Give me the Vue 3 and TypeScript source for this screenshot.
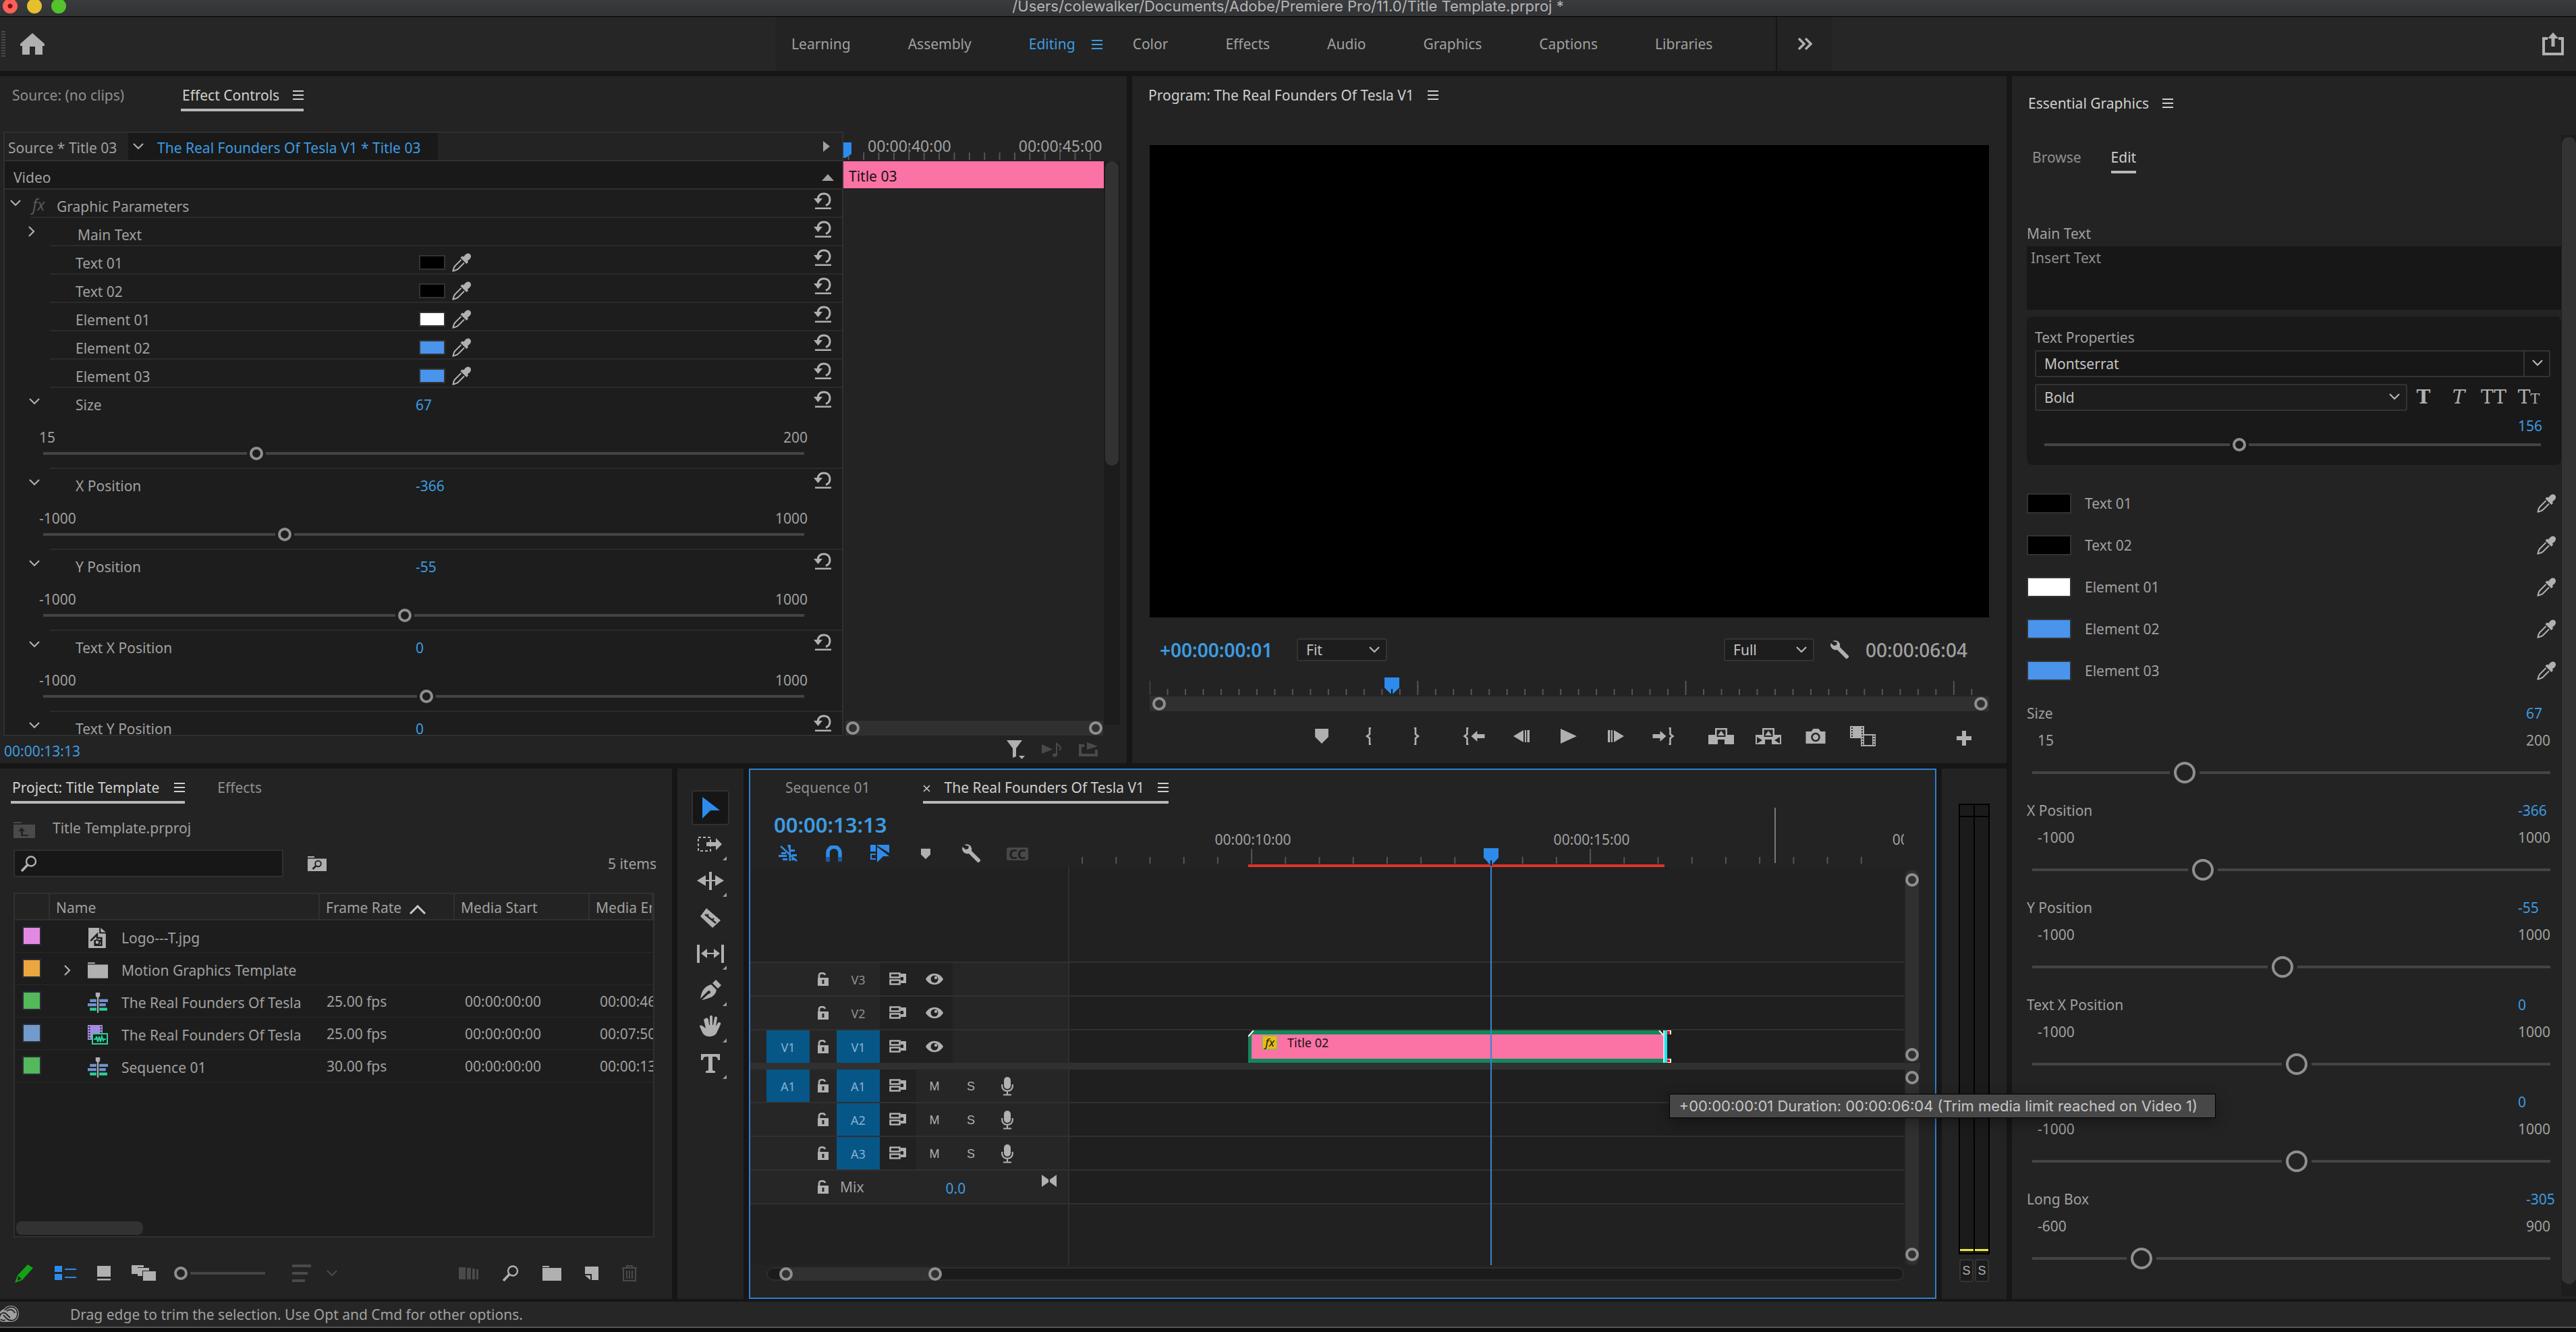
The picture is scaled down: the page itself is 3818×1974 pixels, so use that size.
<script setup lang="ts">
import { ref } from 'vue'

interface Workspace { name: string; active?: boolean }
interface ColorParam { name: string; color: string }
interface RangeParam { id: string; name: string; value: number; min: number; max: number }
interface ProjectItem {
  name: string
  label: string
  icon: string
  fps?: string
  start?: string
  end?: string
  folder?: boolean
}

const workspaces: Workspace[] = [
  { name: 'Learning' },
  { name: 'Assembly' },
  { name: 'Editing', active: true },
  { name: 'Color' },
  { name: 'Effects' },
  { name: 'Audio' },
  { name: 'Graphics' },
  { name: 'Captions' },
  { name: 'Libraries' },
]

const colorParams: ColorParam[] = [
  { name: 'Text 01', color: '#000000' },
  { name: 'Text 02', color: '#000000' },
  { name: 'Element 01', color: '#ffffff' },
  { name: 'Element 02', color: '#4a94ec' },
  { name: 'Element 03', color: '#4a94ec' },
]

const rangeParams = ref<RangeParam[]>([
  { id: 'size', name: 'Size', value: 67, min: 15, max: 200 },
  { id: 'x', name: 'X Position', value: -366, min: -1000, max: 1000 },
  { id: 'y', name: 'Y Position', value: -55, min: -1000, max: 1000 },
  { id: 'tx', name: 'Text X Position', value: 0, min: -1000, max: 1000 },
  { id: 'ty', name: 'Text Y Position', value: 0, min: -1000, max: 1000 },
  { id: 'box', name: 'Long Box', value: -305, min: -600, max: 900 },
])

const items: ProjectItem[] = [
  { name: 'Logo---T.jpg', label: '#e389e3', icon: 'image' },
  { name: 'Motion Graphics Template', label: '#eca63f', icon: 'folder', folder: true },
  { name: 'The Real Founders Of Tesla', label: '#53b95a', icon: 'sequence', fps: '25.00 fps', start: '00:00:00:00', end: '00:00:46:00' },
  { name: 'The Real Founders Of Tesla', label: '#729acb', icon: 'media', fps: '25.00 fps', start: '00:00:00:00', end: '00:07:50:00' },
  { name: 'Sequence 01', label: '#53b95a', icon: 'sequence', fps: '30.00 fps', start: '00:00:00:00', end: '00:00:13:00' },
]

const tools = [
  { id: 'select', name: 'Selection', more: false },
  { id: 'trackselect', name: 'Track select', more: true },
  { id: 'ripple', name: 'Ripple edit', more: true },
  { id: 'razor', name: 'Razor', more: false },
  { id: 'slip', name: 'Slip', more: true },
  { id: 'pen', name: 'Pen', more: true },
  { id: 'hand', name: 'Hand', more: true },
  { id: 'type', name: 'Type', more: true },
]

const videoTracks = [
  { name: 'V3', target: false, source: '' },
  { name: 'V2', target: false, source: '' },
  { name: 'V1', target: true, source: 'V1' },
]
const audioTracks = [
  { name: 'A1', source: 'A1' },
  { name: 'A2', source: '' },
  { name: 'A3', source: '' },
]

const transport = [
  ['marker', 'in', 'out'],
  ['goin', 'stepback', 'play', 'stepfwd', 'goout'],
  ['lift', 'extract', 'camera', 'compare'],
]

/* Timeline view window, in seconds */
const viewStart = 7.31
const viewSpan = 12.32
const at = (t: number): string => `${((t - viewStart) / viewSpan) * 100}%`
const halfSeconds = Array.from({ length: 24 }, (_, i) => 7.5 + i / 2)
const timeLabels = [
  { t: 10, text: '00:00:10:00' },
  { t: 15, text: '00:00:15:00' },
  { t: 20, text: '00:00:20:00' },
]
const clip = { name: 'Title 02', start: 9.95, end: 16.09 }
const playhead = 13.52
const pointer = 17.72

/* Program monitor ruler: 47 divisions, one long tick in fifteen */
const programTicks = Array.from({ length: 47 }, (_, i) => ({ x: `${(i * 100) / 46.97}%`, major: i % 15 === 0 }))
const effectTicks = Array.from({ length: 18 }, (_, i) => ({ x: `${2 + i * 5.8}%`, major: i === 4 || i === 14 }))

const fontSize = ref(156)
const zoom = ref(0)
const mainText = ref('Insert Text')
</script>

<template>
  <div class="app">
    <svg class="sprite" aria-hidden="true">
      <symbol id="home" viewBox="0 0 36 32"><path d="M18 0 36 16v3h-3v13H22V20h-8v12H3V19H0v-3z" /></symbol>
      <symbol id="share" viewBox="0 0 32 34"><path d="M8 9H2v23h28V9h-6" fill="none" stroke="currentColor" stroke-width="4" /><path d="M16 0l8 9h-5.500v12h-5V9H8z" /></symbol>
      <symbol id="more" viewBox="0 0 22 18"><path d="M2 1l8 8-8 8M12 1l8 8-8 8" fill="none" stroke="currentColor" stroke-width="3.500" /></symbol>
      <symbol id="menu" viewBox="0 0 16 14"><path d="M0 0h16v2H0zM0 6h16v2H0zM0 12h16v2H0z" /></symbol>
      <symbol id="down" viewBox="0 0 16 10"><path d="M1 1l7 7 7-7" fill="none" stroke="currentColor" stroke-width="2.200" /></symbol>
      <symbol id="right" viewBox="0 0 10 16"><path d="M1 1l7 7-7 7" fill="none" stroke="currentColor" stroke-width="2.200" /></symbol>
      <symbol id="caret" viewBox="0 0 24 14"><path d="M1 13L12 2l11 11" fill="none" stroke="currentColor" stroke-width="3" /></symbol>
      <symbol id="reset" viewBox="0 0 26 26"><path d="M6 10C7 4 11 2 15 2c6 0 9 4 9 9 0 4-2 7-6 8.500" fill="none" stroke="currentColor" stroke-width="3" /><path d="M0 9h13l-6.500 8zM2 22.500h24V25H2z" /></symbol>
      <symbol id="dropper" viewBox="0 0 28 28"><path d="M18 4.500C20.500 1 24 -.5 26.500 1.500s2 6-1.500 8.500l-2 1.500 1 2-2.500 2.500-9-9L15 4.500l2 1z" /><path d="M13.500 10L4.500 19C2.500 21 2 24 1.500 26.500 4 26 7 25.500 9 23.500l9-9" fill="none" stroke="currentColor" stroke-width="2" /></symbol>
      <symbol id="filter" viewBox="0 0 27 28"><path d="M0 0h23L14 12v12l-5 2V12zM18 23h9l-4.500 5z" /></symbol>
      <symbol id="playnote" viewBox="0 0 30 22"><path d="M0 3l16 7.500L0 17z" /><path d="M22 19V1c1 4 6 4 6 7 0 2-1 3-2 4" fill="none" stroke="currentColor" stroke-width="2" /><ellipse cx="19.500" cy="19" rx="3.500" ry="2.600" /></symbol>
      <symbol id="loopout" viewBox="0 0 28 22"><path d="M8 5H2v14h24v-8" fill="none" stroke="currentColor" stroke-width="4" /><path d="M12 0l16 6-16 5z" /></symbol>
      <symbol id="wrench" viewBox="0 0 28 28"><path d="M3 1c5-2 10 0 11 5 .4 1.500 0 3 0 4l13 13c1 2-2 5-4 4L10 14c-4 1-9-1-10-7 0-1 .3-2 .7-3L5 8l4-1 1-4z" /></symbol>
      <symbol id="marker" viewBox="0 0 18 20"><path d="M0 0h18v11l-9 9-9-9z" /></symbol>
      <symbol id="in" viewBox="0 0 10 26"><path d="M8 1H6v9l-4 3 4 3v9h2" fill="none" stroke="currentColor" stroke-width="2.600" /></symbol>
      <symbol id="out" viewBox="0 0 10 26"><path d="M2 1h2v9l4 3-4 3v9H2" fill="none" stroke="currentColor" stroke-width="2.600" /></symbol>
      <symbol id="goin" viewBox="0 0 31 26"><path d="M7 1H5v9l-4 3 4 3v9h2" fill="none" stroke="currentColor" stroke-width="2.600" /><path d="M11 13l9-8v5h11v6H20v5z" /></symbol>
      <symbol id="goout" viewBox="0 0 31 26"><path d="M24 1h2v9l4 3-4 3v9h-2" fill="none" stroke="currentColor" stroke-width="2.600" /><path d="M20 13l-9-8v5H0v6h11v5z" /></symbol>
      <symbol id="stepback" viewBox="0 0 24 18"><path d="M0 9L15 0v18zM17 0h2v18h-2zM20.500 0H24v18h-3.500z" /></symbol>
      <symbol id="stepfwd" viewBox="0 0 24 18"><path d="M24 9L9 0v18zM0 0h3.500v18H0zM5 0h2v18H5z" /></symbol>
      <symbol id="play" viewBox="0 0 24 22"><path d="M0 0l24 11L0 22z" /></symbol>
      <symbol id="lift" viewBox="0 0 38 24"><path d="M0 10h10V0h18v10h10v14H24v-7H14v7H0z" /><path d="M12.500 2.500h13V13h-13z" fill="#232323" /><path d="M19 4l5 7H14z" /></symbol>
      <symbol id="extract" viewBox="0 0 38 24"><path d="M0 10h10V0h18v10h10v14H24v-7H14v7H0z" /><path d="M12.500 2.500h13V13h-13zM2 13l8 5-8 5zM36 13l-8 5 8 5z" fill="#232323" /><path d="M19 4l5 7H14z" /></symbol>
      <symbol id="camera" viewBox="0 0 29 22"><path d="M0 4h8l3-4h8l3 4h7v18H0z" /><circle cx="14.500" cy="12.500" r="5.500" fill="none" stroke="#232323" stroke-width="2.500" /></symbol>
      <symbol id="compare" viewBox="0 0 38 30"><path d="M0 0h21v18H0z" /><path d="M3 2v14M18 2v10" stroke="#232323" stroke-width="2" stroke-dasharray="2 2" /><path d="M16 12h22v18H16z" /><path d="M21 14h12v14H21z" fill="#232323" /><path d="M18.500 14v14M35.500 14v14" stroke="#232323" stroke-width="2" stroke-dasharray="2 2" /></symbol>
      <symbol id="plus" viewBox="0 0 22 22"><path d="M8 0h6v8h8v6h-8v8H8v-8H0V8h8z" /></symbol>
      <symbol id="upfolder" viewBox="0 0 32 24"><path d="M0 0h12v2H0zM0 4h32v20H0z" /><path d="M12 8l5 6h-3v5h8v2H11v-7H7z" fill="#232323" /></symbol>
      <symbol id="search" viewBox="0 0 24 24"><circle cx="15" cy="8.500" r="7" fill="none" stroke="currentColor" stroke-width="2.400" /><path d="M10 13.500L1 23" stroke="currentColor" stroke-width="3.600" /></symbol>
      <symbol id="searchbin" viewBox="0 0 28 22"><path d="M0 0h10v2H0zM0 3.500h28V22H0z" /><circle cx="15.500" cy="11" r="4.300" fill="none" stroke="#232323" stroke-width="2" /><path d="M12.500 14L7.500 19" stroke="#232323" stroke-width="2.600" /></symbol>
      <symbol id="folder" viewBox="0 0 28 22"><path d="M0 0h10v2H0zM0 3h28v19H0z" /></symbol>
      <symbol id="image" viewBox="0 0 26 28"><path d="M0 0h15v8h9v20H0zM17 0l7 6h-7z" /><path d="M3 18l9-9v5h6v10M9 18h9v6H9z" fill="none" stroke="#1d1d1d" stroke-width="2.400" /><circle cx="12" cy="20" r="3.200" fill="#b0b0b0" stroke="#1d1d1d" stroke-width="2" /></symbol>
      <symbol id="sequence" viewBox="0 0 28 28"><path d="M3 9h9v4H3zM16 9h12v4H16zM0 15h12v4H0zM16 15h9v4h-9z" fill="#6f93cf" /><path d="M3 21h9v4H3zM16 21h11v4H16z" fill="#2bd19a" /><path d="M11 0h6v5l-2 2v21h-2V7l-2-2z" fill="#b0b0b0" /></symbol>
      <symbol id="media" viewBox="0 0 30 30"><path d="M0 0h22v13H8v9H0z" fill="#a58be0" /><path d="M2.500 2v20M19.500 2v11" stroke="#1d1d1d" stroke-width="2" stroke-dasharray="2 2" /><path d="M7 13h22v15H7z" fill="#1d1d1d" stroke="#2bd19a" stroke-width="2" /><path d="M9 21h3l1-4 2 8 2-8 2 8 2-8 2 6 1-2h3" fill="none" stroke="#2bd19a" stroke-width="2" /></symbol>
      <symbol id="pencil" viewBox="0 0 28 28"><path d="M19 1l8 5L11 24 0 28l4-11z" fill="#14a314" /><path d="M5 18l5 4-6 3z" fill="#232323" /></symbol>
      <symbol id="list" viewBox="0 0 32 22"><path d="M0 0h11v9H0zM0 12h11v9H0zM15 4h17v2H15zM15 16h17v2H15z" /></symbol>
      <symbol id="thumb" viewBox="0 0 20 22"><path d="M0 0h20v16H0zM0 19h20v2.500H0z" /></symbol>
      <symbol id="stack" viewBox="0 0 36 24"><path d="M0 0h18v3H9v10H0zM9 4h17v4H16v8H9zM17 9h19v14H17z" /></symbol>
      <symbol id="sort" viewBox="0 0 28 26"><path d="M0 0h28v4H0zM0 11h23v4H0zM0 22h19v4H0z" /></symbol>
      <symbol id="auto" viewBox="0 0 30 18"><path d="M0 0h10v18H0zM12 1h6v17h-6zM20 2h4v16h-4zM26 3h3v15h-3z" /></symbol>
      <symbol id="newitem" viewBox="0 0 20 20"><path d="M0 0h20v20H10v-9H0zM0 13h8v7z" /></symbol>
      <symbol id="trash" viewBox="0 0 22 24"><path d="M0 4h22M7 4V1h8v3M2 4v19h18V4M7 8v12M11 8v12M15 8v12" fill="none" stroke="currentColor" stroke-width="2" /></symbol>
      <symbol id="select" viewBox="0 0 56 50"><path d="M16 9l26 20H28L16 41z" /></symbol>
      <symbol id="trackselect" viewBox="0 0 56 50"><path d="M10 15h18v20H10z" fill="none" stroke="currentColor" stroke-width="2" stroke-dasharray="4 3" /><path d="M22 22h14v-6l9 9-9 9v-6H22z" /></symbol>
      <symbol id="ripple" viewBox="0 0 56 50"><path d="M26 12h4v27h-4zM8 25l13-8v7h14v-7l13 8-13 8v-7H21v7z" /></symbol>
      <symbol id="razor" viewBox="0 0 56 50"><path d="M22 12l21 18-12 11-18-17z" /><path d="M20 21l16 13M22 24l3-3M30 30l3-3" stroke="#232323" stroke-width="2.400" /></symbol>
      <symbol id="slip" viewBox="0 0 56 50"><path d="M8 12h4v27H8zM44 12h4v27h-4zM14 25l9-7v6h10v-6l9 7-9 7v-6H23v6z" /></symbol>
      <symbol id="pen" viewBox="0 0 56 50"><path d="M36 10l8 8-5 5-8-8zM29 17l8 8c-2 10-9 12-22 15l10-9c4 0 4-5 0-5L13 38c2-12 6-18 16-21z" /></symbol>
      <symbol id="hand" viewBox="0 0 56 50"><path d="M21 13c2-1 3 0 4 2l1 8h1V11c0-3 4-3 4 0v12h1l2-11c1-2 4-2 4 1l-2 12 3-5c2-2 5-1 4 2l-6 13c-3 6-17 8-21-1l-4-9c0-2 3-2 5 0l4 3-3-13z" /></symbol>
      <symbol id="type" viewBox="0 0 56 50"><path d="M14 12h28v9h-3c0-4-2-5-5-5h-3v19c0 2 2 2 4 2v3H21v-3c2 0 4 0 4-2V16h-3c-3 0-5 1-5 5h-3z" /></symbol>
      <symbol id="nest" viewBox="0 0 28 26"><path d="M13 0h5v7h6v3h-6v14h-2.500V8zM4 11h7v3H4zM0 15h12v3H0zM20 14h7v3h-7zM6 20h7v3H6zM19 20h5v3h-5z" /><path d="M3 2l24 22" stroke="currentColor" stroke-width="2.400" /></symbol>
      <symbol id="magnet" viewBox="0 0 24 24"><path d="M3 17v-6a8.500 8.500 0 0 1 18 0v6" fill="none" stroke="currentColor" stroke-width="5.500" /><path d="M0 17h6v7H0zM18 17h6v7h-6z" fill="#1c5a96" /></symbol>
      <symbol id="linked" viewBox="0 0 28 26"><path d="M0 0h8v10H0zM10 0h18v12L10 1z" /><path d="M8 14H1v7h7" fill="none" stroke="currentColor" stroke-width="2" /><path d="M10 3l18 14H19l-9 9z" /></symbol>
      <symbol id="lock" viewBox="0 0 18 20"><path d="M3 10V5c0-5 8-5 9-1" fill="none" stroke="currentColor" stroke-width="2.600" /><path d="M1 8h16v12H1z" /><path d="M7.500 11h3v6h-3z" fill="#262626" /></symbol>
      <symbol id="sync" viewBox="0 0 26 20"><path d="M1.500 1.500h14v6h-14zM1.500 11.500h14v6h-14z" fill="none" stroke="currentColor" stroke-width="2.600" /><path d="M17 2h8v14h-8v-4h4V7h-4z" /></symbol>
      <symbol id="eye" viewBox="0 0 26 18"><path d="M0 9C6-2 20-2 26 9 20 20 6 20 0 9z" /><circle cx="13" cy="9" r="5.500" fill="#212121" /><circle cx="15" cy="7" r="2.200" /></symbol>
      <symbol id="mic" viewBox="0 0 18 28"><rect x="4" y="0" width="10" height="18" rx="5" /><path d="M1.200 11v3c0 9 15.600 9 15.600 0v-3M9 21v5M3 26.500h12" fill="none" stroke="currentColor" stroke-width="2.200" /></symbol>
      <symbol id="keys" viewBox="0 0 22 18"><path d="M0 0l10 7v4L0 18zM22 0L12 7v4l10 7z" /></symbol>
      <symbol id="cloud" viewBox="0 0 28 26">
        <path d="M6 5C9 1 13 0 17 0c6 0 11 5 11 12s-5 12-11 12H4c-3 0-6-3-6-9 0-5 4-9 8-10z" />
        <path d="M7 7c3-4 6-5 10-5 5 0 9 4 9 10s-4 10-9 10c-3 0-5-1-7-3l-5-5M0 16c0-5 6-7 9-4l6 6M10 8c5-4 10-2 12 3M1 20c2 2 5 2 7 1" fill="none" stroke="#262626" stroke-width="1.800" />
      </symbol>
    </svg>

    <header class="titlebar">
      <div class="lights">
        <button class="light red" aria-label="Close"></button>
        <button class="light yellow" aria-label="Minimise"></button>
        <button class="light green" aria-label="Zoom"></button>
      </div>
      <h1>/Users/colewalker/Documents/Adobe/Premiere Pro/11.0/Title Template.prproj *</h1>
    </header>

    <nav class="workbar">
      <span class="grip"></span>
      <button class="home" aria-label="Home"><svg width="36" height="32"><use href="#home" /></svg></button>
      <div class="spaces">
        <a v-for="w in workspaces" :key="w.name" href="#" :class="{ on: w.active }">
          {{ w.name }}<svg v-if="w.active" class="menu" width="16" height="14"><use href="#menu" /></svg>
        </a>
      </div>
      <button class="overflow" aria-label="More workspaces"><svg width="22" height="18"><use href="#more" /></svg></button>
      <button class="share" aria-label="Share"><svg width="32" height="34"><use href="#share" /></svg></button>
    </nav>

    <main class="desk">
      <div class="work">
        <div class="top">
          <!-- Effect controls -->
          <section class="panel effects">
            <div class="tabs">
              <button class="tab">Source: (no clips)</button>
              <button class="tab on">Effect Controls<svg width="16" height="14"><use href="#menu" /></svg></button>
            </div>
            <div class="ec">
              <div class="ec-list">
                <div class="ec-head">
                  <span class="ec-src">Source * Title 03</span>
                  <div class="ec-seq"><svg width="16" height="10"><use href="#down" /></svg><a href="#">The Real Founders Of Tesla V1 * Title 03</a></div>
                  <svg class="ec-tri" width="10" height="16" viewBox="0 0 10 16"><path d="M0 0l10 8-10 8z" /></svg>
                </div>
                <div class="ec-video">Video<svg width="18" height="10" viewBox="0 0 18 10"><path d="M9 0l9 10H0z" /></svg></div>
                <div class="ec-row graphic">
                  <div class="ec-name"><svg class="chev" width="16" height="10"><use href="#down" /></svg><i class="fx">fx</i><span>Graphic Parameters</span></div>
                  <div></div>
                  <button class="reset" aria-label="Reset"><svg width="26" height="26"><use href="#reset" /></svg></button>
                </div>
                <div class="ec-row">
                  <div class="ec-name sub wide"><svg class="chev" width="10" height="16"><use href="#right" /></svg><span>Main Text</span></div>
                  <div></div>
                  <button class="reset" aria-label="Reset"><svg width="26" height="26"><use href="#reset" /></svg></button>
                </div>
                <div v-for="c in colorParams" :key="c.name" class="ec-row">
                  <div class="ec-name sub"><span>{{ c.name }}</span></div>
                  <div class="ec-color">
                    <button class="swatch" :style="{ background: c.color }" :aria-label="c.name"></button>
                    <button :aria-label="'Pick ' + c.name"><svg width="28" height="28"><use href="#dropper" /></svg></button>
                  </div>
                  <button class="reset" aria-label="Reset"><svg width="26" height="26"><use href="#reset" /></svg></button>
                </div>
                <div v-for="(p, i) in rangeParams.slice(0, 5)" :key="p.id" class="ec-group">
                  <div class="ec-row plain">
                    <div class="ec-name sub"><svg class="chev" width="16" height="10"><use href="#down" /></svg><label :for="'ec-' + p.id">{{ p.name }}</label></div>
                    <button class="num">{{ p.value }}</button>
                    <button class="reset" aria-label="Reset"><svg width="26" height="26"><use href="#reset" /></svg></button>
                  </div>
                  <div v-if="i < 4" class="ec-limits"><span>{{ p.min }}</span><span>{{ p.max }}</span></div>
                  <input v-if="i < 4" :id="'ec-' + p.id" v-model.number="p.value" class="slider small" type="range" :min="p.min" :max="p.max">
                </div>
              </div>
              <div class="ec-time">
                <div class="ec-ruler">
                  <span>00:00:40:00</span><span>00:00:45:00</span>
                  <svg class="ticks"><line v-for="(t, i) in effectTicks" :key="i" :x1="t.x" :x2="t.x" :y1="t.major ? 20 : 31" y2="42" /></svg>
                  <i class="ec-head-mark"></i>
                </div>
                <div class="ec-clip">Title 03</div>
                <div class="zoombar"><i></i><i></i></div>
              </div>
              <div class="ec-scroll"><i></i></div>
            </div>
            <div class="ec-foot">
              <span class="blue">00:00:13:13</span>
              <div>
                <button aria-label="Filter properties"><svg width="27" height="28"><use href="#filter" /></svg></button>
                <button class="dim" aria-label="Play audio"><svg width="30" height="22"><use href="#playnote" /></svg></button>
                <button class="dim" aria-label="Loop audio"><svg width="28" height="22"><use href="#loopout" /></svg></button>
              </div>
            </div>
          </section>

          <!-- Program monitor -->
          <section class="panel program">
            <h2>Program: The Real Founders Of Tesla V1<svg width="16" height="14"><use href="#menu" /></svg></h2>
            <div class="screen"></div>
            <div class="monitor">
              <span class="tc blue">+00:00:00:01</span>
              <div class="pick"><select aria-label="Zoom level"><option>Fit</option></select><svg width="16" height="10"><use href="#down" /></svg></div>
              <span class="fill"></span>
              <div class="pick"><select aria-label="Playback resolution"><option>Full</option></select><svg width="16" height="10"><use href="#down" /></svg></div>
              <button aria-label="Settings"><svg width="28" height="28"><use href="#wrench" /></svg></button>
              <span class="tc total">00:00:06:04</span>
            </div>
            <div class="pm-ruler">
              <svg class="ticks"><line v-for="(t, i) in programTicks" :key="i" :x1="t.x" :x2="t.x" :y1="t.major ? 5 : 17" y2="26" /></svg>
              <svg class="head" width="22" height="24" viewBox="0 0 22 24"><path d="M0 0h22v15l-9 9h-4l-9-9z" fill="#2d8ceb" /><path d="M11 17v7" stroke="#111" stroke-width="2" /></svg>
            </div>
            <div class="zoombar"><i></i><i></i></div>
            <div class="transport">
              <div v-for="(g, i) in transport" :key="i">
                <button v-for="b in g" :key="b" :aria-label="b"><svg width="38" height="30" :class="'t-' + b"><use :href="'#' + b" /></svg></button>
              </div>
              <button class="add" aria-label="Button editor"><svg width="22" height="22"><use href="#plus" /></svg></button>
            </div>
          </section>
        </div>

        <div class="bottom">
          <!-- Project -->
          <section class="panel project">
            <div class="tabs">
              <button class="tab on">Project: Title Template<svg width="16" height="14"><use href="#menu" /></svg></button>
              <button class="tab">Effects</button>
            </div>
            <div class="crumb"><svg width="32" height="24"><use href="#upfolder" /></svg>Title Template.prproj</div>
            <div class="find">
              <div class="find-box"><svg width="24" height="24"><use href="#search" /></svg><input type="text" aria-label="Search project"></div>
              <button aria-label="New search bin"><svg width="28" height="22"><use href="#searchbin" /></svg></button>
              <span>5 items</span>
            </div>
            <div class="bin">
              <table>
                <colgroup><col class="c-label"><col class="c-name"><col class="c-time"><col class="c-time"><col></colgroup>
                <thead>
                  <tr><th></th><th>Name</th><th>Frame Rate<svg width="24" height="14"><use href="#caret" /></svg></th><th>Media Start</th><th>Media End</th></tr>
                </thead>
                <tbody>
                  <tr v-for="(it, i) in items" :key="i">
                    <td><i class="chip" :style="{ background: it.label }"></i></td>
                    <td><div class="item"><span class="twirl"><svg v-if="it.folder" width="10" height="16"><use href="#right" /></svg></span><svg width="30" height="30" :class="'k-' + it.icon"><use :href="'#' + it.icon" /></svg>{{ it.name }}</div></td>
                    <td>{{ it.fps }}</td>
                    <td class="code">{{ it.start }}</td>
                    <td class="code">{{ it.end }}</td>
                  </tr>
                </tbody>
              </table>
              <i class="hthumb"></i>
            </div>
            <div class="binbar">
              <button aria-label="Writable"><svg width="28" height="28"><use href="#pencil" /></svg></button>
              <button class="blue-icon" aria-label="List view"><svg width="32" height="22"><use href="#list" /></svg></button>
              <button aria-label="Icon view"><svg width="20" height="22"><use href="#thumb" /></svg></button>
              <button aria-label="Freeform view"><svg width="36" height="24"><use href="#stack" /></svg></button>
              <input v-model.number="zoom" class="slider bare" type="range" min="0" max="100" aria-label="Thumbnail size">
              <button class="dim" aria-label="Sort icons"><svg width="28" height="26"><use href="#sort" /></svg></button>
              <svg class="dim" width="16" height="10"><use href="#down" /></svg>
              <div class="bin-actions">
                <button class="dim" aria-label="Automate to sequence"><svg width="30" height="18"><use href="#auto" /></svg></button>
                <button aria-label="Find"><svg width="24" height="24"><use href="#search" /></svg></button>
                <button aria-label="New bin"><svg width="28" height="22"><use href="#folder" /></svg></button>
                <button aria-label="New item"><svg width="20" height="20"><use href="#newitem" /></svg></button>
                <button class="dim" aria-label="Clear"><svg width="22" height="24"><use href="#trash" /></svg></button>
              </div>
            </div>
          </section>

          <!-- Tools -->
          <section class="panel tools">
            <button v-for="t in tools" :key="t.id" :class="{ on: t.id === 'select' }" :aria-label="t.name">
              <svg width="56" height="50"><use :href="'#' + t.id" /></svg><i v-if="t.more"></i>
            </button>
          </section>

          <!-- Timeline -->
          <section class="panel timeline">
            <div class="tabs">
              <button class="tab">Sequence 01</button>
              <button class="tab on"><svg class="close" width="11" height="11" viewBox="0 0 11 11"><path d="M1 1l9 9M10 1l-9 9" stroke="currentColor" stroke-width="1.500" /></svg>The Real Founders Of Tesla V1<svg width="16" height="14"><use href="#menu" /></svg></button>
            </div>
            <div class="tl">
              <div class="tl-heads">
                <div class="tl-top">
                  <span class="tc blue">00:00:13:13</span>
                  <div class="tl-icons">
                    <button class="blue-icon" aria-label="Insert as nests"><svg width="28" height="26"><use href="#nest" /></svg></button>
                    <button class="blue-icon" aria-label="Snap"><svg width="24" height="24"><use href="#magnet" /></svg></button>
                    <button class="blue-icon" aria-label="Linked selection"><svg width="28" height="26"><use href="#linked" /></svg></button>
                    <button aria-label="Add marker"><svg width="14" height="17"><use href="#marker" /></svg></button>
                    <button aria-label="Timeline settings"><svg width="28" height="28"><use href="#wrench" /></svg></button>
                    <button class="cc" aria-label="Captions"><b>CC</b></button>
                  </div>
                </div>
                <div class="tl-empty"></div>
                <div v-for="t in videoTracks" :key="t.name" class="th" :class="{ last: t.name === 'V1' }">
                  <button class="patch" :class="{ lit: t.source }">{{ t.source }}</button>
                  <button class="lock" aria-label="Lock"><svg width="18" height="20"><use href="#lock" /></svg></button>
                  <button class="patch" :class="{ lit: t.target }">{{ t.name }}</button>
                  <button class="sync" aria-label="Sync lock"><svg width="26" height="20"><use href="#sync" /></svg></button>
                  <button class="vis" aria-label="Track output"><svg width="26" height="18"><use href="#eye" /></svg></button>
                </div>
                <div class="split"></div>
                <div v-for="t in audioTracks" :key="t.name" class="th">
                  <button class="patch" :class="{ lit: t.source }">{{ t.source }}</button>
                  <button class="lock" aria-label="Lock"><svg width="18" height="20"><use href="#lock" /></svg></button>
                  <button class="patch lit">{{ t.name }}</button>
                  <button class="sync" aria-label="Sync lock"><svg width="26" height="20"><use href="#sync" /></svg></button>
                  <button class="ms">M</button>
                  <button class="ms">S</button>
                  <button class="ms" aria-label="Voice-over record"><svg width="18" height="28"><use href="#mic" /></svg></button>
                </div>
                <div class="th mix">
                  <span class="patch"></span>
                  <button class="lock" aria-label="Lock"><svg width="18" height="20"><use href="#lock" /></svg></button>
                  <span class="mixname">Mix</span>
                  <button class="num">0.0</button>
                  <button class="keys" aria-label="Keyframes"><svg width="22" height="18"><use href="#keys" /></svg></button>
                </div>
                <div class="tl-rest"></div>
              </div>
              <div class="tl-time">
                <div class="tl-ruler">
                  <span v-for="l in timeLabels" :key="l.t" :style="{ left: at(l.t) }">{{ l.text }}</span>
                  <svg class="ticks"><line v-for="s in halfSeconds" :key="s" :x1="at(s)" :x2="at(s)" :y1="s % 5 ? 79 : 67" y2="89" /></svg>
                  <i class="render" :style="{ left: at(clip.start), right: `calc(100% - ${at(clip.end)})` }"></i>
                  <i class="hover" :style="{ left: at(pointer) }"></i>
                </div>
                <div class="tl-empty"></div>
                <div class="lane"></div>
                <div class="lane"></div>
                <div class="lane last">
                  <div class="clip" :style="{ left: at(clip.start), right: `calc(100% - ${at(clip.end)})` }">
                    <i class="badge">fx</i><span>{{ clip.name }}</span>
                    <svg class="fade l" width="10" height="16" viewBox="0 0 10 16"><path d="M0 0h9L0 10z" fill="#1f1f1f" /><path d="M0 9l8-9" stroke="#fff" stroke-width="2" /></svg>
                    <svg class="fade r" width="10" height="16" viewBox="0 0 10 16"><path d="M10 0H1l9 10z" fill="#1f1f1f" /><path d="M10 9L2 0" stroke="#fff" stroke-width="2" /></svg>
                    <svg class="trim" width="12" height="48" viewBox="0 0 12 48"><path d="M0 0h2v48H0z" fill="#ddd" /><path d="M2 0h4v48H2z" fill="#16e8ee" /><path d="M6 0h6v6H6zM6 42h6v6H6z" fill="#fff" /><path d="M6 1h4v5H6zM6 43h4v4H6z" fill="#e00" /></svg>
                    <div class="tip" role="tooltip">+00:00:00:01 Duration: 00:00:06:04 (Trim media limit reached on Video 1)</div>
                  </div>
                </div>
                <div class="split"></div>
                <div v-for="n in 4" :key="n" class="lane"></div>
                <div class="tl-rest"></div>
                <div class="playhead" :style="{ left: at(playhead) }"><svg width="22" height="26" viewBox="0 0 22 26"><path d="M0 0h22v14L11 26 0 14z" fill="#2d8ceb" /><path d="M11 18v8" stroke="#111" stroke-width="2" /></svg></div>
              </div>
              <div class="tl-scroll">
                <div class="vbar video"><i></i><i></i></div>
                <div class="split"></div>
                <div class="vbar audio"><i></i><i></i></div>
              </div>
            </div>
            <div class="tl-zoom"><div><i></i><i></i></div></div>
          </section>

          <!-- Audio meters -->
          <section class="panel meters">
            <div class="meter"><div><i></i></div><div><i></i></div></div>
            <div class="solo"><button>S</button><button>S</button></div>
          </section>
        </div>
      </div>

      <!-- Essential graphics -->
      <aside class="panel graphics">
        <h2>Essential Graphics<svg width="16" height="14"><use href="#menu" /></svg></h2>
        <div class="eg">
          <div class="eg-body">
            <div class="eg-tabs"><button>Browse</button><button class="on">Edit</button></div>
            <label class="eg-label" for="main-text">Main Text</label>
            <textarea id="main-text" v-model="mainText"></textarea>
            <div class="card">
              <span>Text Properties</span>
              <div class="pick font"><select aria-label="Font"><option>Montserrat</option></select><svg width="16" height="10"><use href="#down" /></svg></div>
              <div class="style-row">
                <div class="pick weight"><select aria-label="Font style"><option>Bold</option></select><svg width="16" height="10"><use href="#down" /></svg></div>
                <button class="faux" aria-label="Faux bold"><b>T</b></button>
                <button class="faux" aria-label="Faux italic"><em>T</em></button>
                <button class="faux" aria-label="All caps">TT</button>
                <button class="faux" aria-label="Small caps">T<small>T</small></button>
              </div>
              <label class="num" for="font-size">{{ fontSize }}</label>
              <input id="font-size" v-model.number="fontSize" class="slider small" type="range" min="0" max="400">
            </div>
            <div class="colors">
              <div v-for="c in colorParams" :key="c.name">
                <button class="swatch" :style="{ background: c.color }" :aria-label="c.name"></button>
                <span>{{ c.name }}</span>
                <button :aria-label="'Pick ' + c.name"><svg width="28" height="28"><use href="#dropper" /></svg></button>
              </div>
            </div>
            <div v-for="p in rangeParams" :key="p.id" class="param">
              <label :for="'eg-' + p.id">{{ p.name }}</label>
              <span class="num">{{ p.value }}</span>
              <span class="min">{{ p.min }}</span>
              <span>{{ p.max }}</span>
              <input :id="'eg-' + p.id" v-model.number="p.value" class="slider" type="range" :min="p.min" :max="p.max">
            </div>
          </div>
          <div class="eg-scroll"><i></i></div>
        </div>
      </aside>
    </main>

    <footer class="status">
      <svg width="28" height="26"><use href="#cloud" /></svg>
      <span>Drag edge to trim the selection. Use Opt and Cmd for other options.</span>
    </footer>
  </div>
</template>

<style>
body {
  background: #161616;
}
</style>

<style scoped>
.app {
  --panel: #232323;
  --line: #303030;
  --blue: #3d9be0;
  display: flex;
  flex-direction: column;
  height: 100vh;
  overflow: hidden;
  font: 21px/28px "Noto Sans", "Open Sans", sans-serif;
  color: #a0a0a0;
  background: #161616;
}
.app *,
.app *::before,
.app *::after {
  box-sizing: border-box;
}
.sprite {
  position: absolute;
  width: 0;
  height: 0;
}
svg {
  fill: currentColor;
  flex: none;
  display: block;
}
i {
  display: block;
}
button {
  border: 0;
  padding: 0;
  background: none;
  font: inherit;
  color: #b0b0b0;
}
a {
  color: inherit;
  text-decoration: none;
}
h1,
h2 {
  margin: 0;
  font-weight: 400;
}
.fill {
  flex: 1;
}
.blue,
.num {
  color: var(--blue);
}
button.dim,
.dim {
  color: #4a4a4a;
}
button.blue-icon {
  color: #2d8ceb;
}
.panel {
  background: var(--panel);
  min-width: 0;
  min-height: 0;
  display: flex;
  flex-direction: column;
}
.ticks {
  position: absolute;
  inset: 0;
  width: 100%;
  height: 100%;
  stroke: #555;
  stroke-width: 2;
}

/* Window chrome */
.titlebar {
  position: relative;
  flex: none;
  height: 25px;
  background: linear-gradient(#3a3b3e, #323335);
  border-bottom: 1px solid #000;
  overflow: hidden;
}
.titlebar h1 {
  font: 22px/18px Inter, sans-serif;
  color: #b4b4b6;
  text-align: center;
}
.lights {
  position: absolute;
  left: 4px;
  top: -2px;
  display: flex;
  gap: 14px;
}
.light {
  width: 22px;
  height: 22px;
  border-radius: 50%;
}
.red {
  background: radial-gradient(circle, #7d1010 3px, #ff5f57 4px);
}
.yellow {
  background: #e6bf2c;
}
.green {
  background: #53c22c;
}
.workbar {
  flex: none;
  height: 80px;
  display: flex;
  align-items: center;
  background: #262626;
}
.grip {
  width: 6px;
  height: 38px;
  margin-left: 2px;
  background: repeating-linear-gradient(#4a4a4a 0 2px, transparent 2px 4px);
}
.home {
  margin-left: 22px;
}
.spaces {
  height: 80px;
  margin-left: auto;
  display: flex;
  align-items: center;
  gap: 85px;
  padding: 0 94px 0 24px;
  background: var(--panel);
  border-right: 2px solid #161616;
}
.spaces a {
  position: relative;
}
.spaces .on {
  color: var(--blue);
}
.spaces .menu {
  position: absolute;
  left: calc(100% + 24px);
  top: 8px;
}
.overflow {
  height: 80px;
  padding: 0 30px;
  background: var(--panel);
}
.share {
  margin-left: 26.6%;
  height: 80px;
  flex: none;
  padding: 0 18px 0 36px;
}

/* Panel grid */
.desk {
  flex: 1;
  min-height: 0;
  display: grid;
  grid-template-columns: minmax(0, 2974fr) minmax(0, 836fr);
  gap: 8px;
  padding: 8px 0 4px;
}
.work {
  display: grid;
  grid-template-rows: minmax(0, 1018fr) minmax(0, 786fr);
  gap: 8px;
  min-height: 0;
}
.top {
  display: grid;
  grid-template-columns: minmax(0, 1670fr) minmax(0, 1296fr);
  gap: 8px;
  min-height: 0;
}
.bottom {
  display: grid;
  grid-template-columns: minmax(0, 996fr) 98px minmax(0, 1760fr) 96px;
  gap: 8px;
  min-height: 0;
}
.tabs {
  flex: none;
  display: flex;
  height: 52px;
}
.tab {
  display: flex;
  align-items: center;
  padding: 8px 0 0 2px;
  border-bottom: 4px solid transparent;
  color: #8f8f8f;
}
.tab.on {
  color: #cfcfcf;
  border-color: #b8b8b8;
}
.tab svg {
  margin-left: 20px;
}

/* Range inputs: hollow knob that leaves a break in its track */
.slider {
  appearance: none;
  display: block;
  height: 32px;
  margin: 0;
  background: linear-gradient(#444, #444) 3px center / calc(100% - 22px) 4px no-repeat;
}
.slider::-webkit-slider-thumb {
  appearance: none;
  width: 32px;
  height: 32px;
  border: 4px solid #8f8f8f;
  border-radius: 50%;
  background: var(--panel);
  box-shadow: 0 0 0 6px var(--panel);
}
.slider.small,
.slider.bare {
  height: 20px;
}
.slider.small::-webkit-slider-thumb,
.slider.bare::-webkit-slider-thumb {
  width: 20px;
  height: 20px;
  box-shadow: 0 0 0 4px var(--knob, #1d1d1d);
  background: var(--knob, #1d1d1d);
}
.slider.small {
  background-position: 17px center;
  background-size: calc(100% - 42px) 4px;
}

/* Zoom bar with a ring at each end */
.zoombar {
  display: flex;
  justify-content: space-between;
  align-items: center;
  height: 22px;
  padding: 0 2px;
  background: #303030;
}
.zoombar i,
.vbar i,
.tl-zoom i {
  width: 20px;
  height: 20px;
  border: 4px solid #8f8f8f;
  border-radius: 50%;
}

/* Effect controls */
.effects {
  padding: 0 10px 0 5px;
}
.effects .tabs {
  gap: 84px;
  padding-left: 11px;
}
.ec {
  flex: 1;
  min-height: 0;
  margin-top: 30px;
  display: grid;
  grid-template-columns: minmax(0, 1fr) 386px 24px;
}
.ec-list {
  min-height: 0;
  overflow: hidden;
  background: #1d1d1d;
  border: 2px solid var(--line);
}
.ec-head {
  display: flex;
  align-items: center;
  height: 42px;
  background: var(--panel);
  border-bottom: 2px solid var(--line);
}
.ec-src {
  width: 183px;
  padding: 4px 0 0 5px;
}
.ec-seq {
  height: 40px;
  display: flex;
  align-items: center;
  gap: 20px;
  padding: 0 26px 0 7px;
  background: #191919;
  color: #b0b0b0;
}
.ec-seq a {
  padding-top: 4px;
  color: var(--blue);
}
.ec-tri {
  margin-left: auto;
  margin-right: 18px;
}
.ec-video {
  display: flex;
  align-items: center;
  justify-content: space-between;
  height: 42px;
  padding: 8px 12px 0 13px;
  background: #191919;
  border-bottom: 2px solid var(--line);
}
.ec-row {
  display: grid;
  grid-template-columns: 609px minmax(0, 1fr) 26px;
  align-items: center;
  height: 42px;
  padding: 0 16px 2px 0;
  background: linear-gradient(#2b2b2b, #2b2b2b) 67px bottom / 100% 2px no-repeat;
}
.ec-row.graphic {
  background-position: 39px bottom;
}
.ec-row.plain {
  height: 40px;
  padding-bottom: 0;
  background: none;
}
.ec-name {
  display: flex;
  align-items: center;
  padding-left: 8px;
}
.ec-name span,
.ec-name label,
.ec-row .num {
  padding-top: 9px;
}
.ec-name .chev {
  width: 16px;
  color: #b0b0b0;
}
.ec-name.sub {
  padding-left: 105px;
}
.ec-name.wide {
  padding-left: 108px;
}
.ec-name.sub .chev {
  margin-left: -69px;
  margin-right: 53px;
}
.ec-name.wide .chev {
  margin-left: -76px;
  margin-right: 60px;
}
.fx {
  width: 38px;
  margin: 4px 0 0 17px;
  color: #5a5a5a;
  font-size: 23px;
}
.ec-name .fx + span {
  margin-left: -2px;
}
.ec-color {
  display: flex;
  align-items: center;
  gap: 10px;
  padding: 7px 0 0 5px;
}
.swatch {
  width: 39px;
  height: 22px;
  border: 2px solid #333;
}
.ec-row .num {
  text-align: left;
}
.reset {
  padding-bottom: 7px;
}
.ec-group {
  height: 120px;
  background: linear-gradient(#2b2b2b, #2b2b2b) 67px bottom / 100% 2px no-repeat;
}
.ec-limits {
  display: flex;
  justify-content: space-between;
  height: 28px;
  margin-top: 19px;
  padding: 0 51px;
}
.ec-group .slider {
  width: calc(100% - 71px);
  margin-left: 40px;
}
.ec-time {
  min-height: 0;
  display: flex;
  flex-direction: column;
}
.ec-ruler {
  position: relative;
  flex: none;
  height: 44px;
  display: flex;
  gap: 100px;
  padding: 7px 0 0 36px;
  font-size: 23px;
  overflow: hidden;
  white-space: nowrap;
}
.ec-head-mark {
  position: absolute;
  left: 0;
  top: 16px;
  width: 12px;
  height: 23px;
  background: #2d8ceb;
  clip-path: polygon(0 0, 100% 0, 100% 75%, 25% 100%, 0 100%);
}
.ec-clip {
  flex: none;
  height: 40px;
  padding: 8px 8px 0;
  background: #fb72a5;
  color: #141414;
}
.ec-time .zoombar {
  margin: auto 1px 1px 3px;
  padding: 0 1px;
}
.ec-scroll {
  margin: 44px 0 17px;
  padding: 0 2px;
  background: #1c1c1c;
}
.ec-scroll i {
  height: 54%;
  border-radius: 10px;
  background: #323232;
}
.ec-foot {
  flex: none;
  height: 40px;
  display: flex;
  justify-content: space-between;
  padding: 8px 33px 0 1px;
}
.ec-foot div {
  display: flex;
  gap: 25px;
  height: 28px;
  align-items: center;
  margin-top: -2px;
}

/* Program monitor */
.program h2,
.graphics h2 {
  display: flex;
  align-items: center;
  gap: 20px;
  color: #cfcfcf;
  font-size: 21px;
}
.program h2 {
  height: 56px;
  padding-left: 24px;
}
.screen {
  flex: 1;
  margin: 46px 26px 0;
  background: #000;
}
.monitor {
  display: flex;
  align-items: center;
  gap: 24px;
  height: 34px;
  margin-top: 31px;
  padding: 0 58px 0 41px;
}
.tc {
  font-size: 28px;
  line-height: 34px;
}
.tc.total {
  font-weight: 500;
}
.tc.blue {
  font-weight: 600;
  min-width: 179px;
}
.pick {
  position: relative;
  width: 134px;
  height: 34px;
}
.pick select {
  appearance: none;
  width: 100%;
  height: 100%;
  padding: 0 12px;
  border: 2px solid #333;
  border-radius: 3px;
  background: #1d1d1d;
  color: #c4c4c4;
  font: inherit;
}
.pick svg {
  position: absolute;
  right: 11px;
  top: 12px;
  color: #b8b8b8;
  pointer-events: none;
}
.pm-ruler {
  position: relative;
  height: 28px;
  margin: 24px 26px 0;
}
.pm-ruler .head {
  position: absolute;
  left: 28%;
  top: 0;
}
.program .zoombar {
  margin: 0 26px;
  padding: 0 2px 0 4px;
}
.transport {
  display: flex;
  gap: 16px;
  height: 40px;
  margin: 17px 0 20px;
  padding: 0 52px 0 246px;
}
.transport div {
  display: flex;
}
.transport div button {
  width: 70px;
  display: flex;
  justify-content: center;
  align-items: center;
}
.t-marker,
.t-camera,
.t-play {
  height: 22px;
}
.t-stepback,
.t-stepfwd {
  height: 18px;
}
.t-in,
.t-out,
.t-goin,
.t-goout {
  height: 26px;
}
.t-lift,
.t-extract {
  height: 24px;
}
.transport .add {
  margin-left: auto;
  padding-top: 6px;
}

/* Project */
.project .tabs {
  gap: 46px;
  padding-left: 16px;
}
.project .tab svg {
  margin-left: 22px;
}
.crumb {
  display: flex;
  gap: 26px;
  height: 30px;
  margin: 22px 0 16px 20px;
}
.crumb svg {
  margin-top: 5px;
  color: #4a4a4a;
}
.find {
  display: flex;
  align-items: center;
  height: 41px;
  margin: 0 23px 23px 20px;
}
.find-box {
  display: flex;
  align-items: center;
  width: 400px;
  height: 41px;
  padding: 0 9px;
  border: 2px solid var(--line);
  border-radius: 3px;
  background: #171717;
  color: #b0b0b0;
}
.find-box input {
  flex: 1;
  min-width: 0;
  border: 0;
  background: none;
  color: inherit;
  font: inherit;
}
.find button {
  margin-left: 36px;
}
.find span {
  margin-left: auto;
}
.bin {
  flex: 1;
  min-height: 0;
  display: flex;
  flex-direction: column;
  justify-content: space-between;
  margin: 0 26px 0 20px;
  overflow: hidden;
  border: 2px solid var(--line);
  background: #1d1d1d;
}
table {
  width: 100%;
  table-layout: fixed;
  border-collapse: separate;
  border-spacing: 0;
}
.c-label {
  width: 52px;
}
.c-name {
  width: 400px;
}
.c-time {
  width: 200px;
}
th,
td {
  padding: 0 0 0 9px;
  overflow: hidden;
  white-space: nowrap;
  text-align: left;
  font-weight: 400;
}
th {
  height: 39px;
  padding-top: 3px;
  background: var(--panel);
  border-right: 2px solid var(--line);
  border-bottom: 2px solid var(--line);
}
th svg {
  display: inline-block;
  margin-left: 12px;
  vertical-align: -2px;
  color: #c8c8c8;
}
td {
  height: 48px;
  border-bottom: 1px solid #282828;
}
td.code {
  padding-left: 15px;
}
td:nth-child(3) {
  padding-left: 10px;
}
.chip {
  width: 28px;
  height: 28px;
  margin-bottom: 1px;
  border: 2px solid #2c2c38;
}
td:first-child {
  padding-left: 11px;
}
.item {
  display: flex;
  align-items: center;
  gap: 20px;
  padding-top: 4px;
}
.item svg {
  color: #b0b0b0;
}
.twirl {
  width: 27px;
  padding-left: 12px;
}
.item .k-folder {
  height: 24px;
}
.hthumb {
  width: 188px;
  height: 20px;
  margin: 2px;
  border-radius: 8px;
  background: #323232;
}
.binbar {
  display: flex;
  align-items: center;
  gap: 31px;
  height: 40px;
  margin: 33px 52px 18px 22px;
}
.slider.bare {
  --knob: #232323;
  width: 135px;
  margin: 0 9px 0 -4px;
  background-position: 24px center;
}
.binbar .dim + .dim {
  margin-left: -8px;
}
.bin-actions {
  display: flex;
  align-items: center;
  gap: 35px;
  margin-left: auto;
}

/* Tools */
.tools {
  align-items: center;
  gap: 2px;
  padding-top: 32px;
}
.tools button {
  position: relative;
  width: 56px;
  height: 52px;
  border: 2px solid transparent;
  display: flex;
  align-items: center;
  justify-content: center;
}
.tools .on {
  background: #161616;
  border-color: #303030;
  border-radius: 4px;
  color: #2d8ceb;
}
.tools i {
  position: absolute;
  right: 2px;
  bottom: 0;
  width: 6px;
  height: 6px;
  background: #9a9a9a;
  clip-path: polygon(100% 0, 100% 100%, 0 100%);
}

/* Timeline */
.timeline {
  border: 2px solid #2f80cf;
}
.timeline .tabs {
  height: 50px;
  gap: 78px;
  padding-left: 50px;
}
.timeline .tab {
  padding-top: 6px;
}
.timeline .tab.on {
  padding-left: 0;
}
.timeline .close {
  margin: 2px 21px 0 0;
}
.tl {
  flex: 1;
  min-height: 0;
  display: grid;
  grid-template-columns: 473px minmax(0, 1fr) 46px;
}
.tl-heads,
.tl-time,
.tl-scroll {
  display: flex;
  flex-direction: column;
  min-height: 0;
}
.tl-top,
.tl-ruler {
  flex: none;
  height: 94px;
}
.tl-top .tc {
  display: block;
  padding: 14px 0 0 35px;
  font-size: 31px;
}
.tl-icons {
  display: flex;
  height: 52px;
  padding-left: 22px;
}
.tl-icons button {
  width: 68px;
  display: flex;
  align-items: center;
  justify-content: center;
}
.cc b {
  padding: 0 3px;
  border-radius: 3px;
  background: #484848;
  color: #1f1f1f;
  font-size: 20px;
  line-height: 19px;
}
.tl-empty {
  flex: none;
  height: 142px;
  background: #212121;
  border-bottom: 2px solid var(--line);
}
.tl-heads > *:not(.tl-top):not(.split) {
  border-right: 2px solid var(--line);
}
.tl-rest {
  flex: 1;
  background: #212121;
}
.split {
  flex: none;
  height: 10px;
  background: var(--line);
}
.th,
.lane {
  flex: none;
  height: 50px;
  border-bottom: 2px solid var(--line);
}
.th.last,
.lane.last {
  height: 48px;
  border-bottom: 0;
}
.th {
  display: flex;
  align-items: stretch;
  padding-left: 24px;
  background: #262626;
}
.th > * {
  display: flex;
  align-items: center;
  justify-content: center;
}
.patch {
  width: 64px;
  color: #8f8f8f;
  font-size: 18px;
  padding-top: 2px;
}
.patch.lit {
  background: #075688;
  color: #87b2cf;
}
.lock {
  width: 40px;
}
.sync {
  width: 54px;
  background: #212121;
}
.vis {
  width: 54px;
  background: #212121;
}
.ms {
  width: 54px;
  padding-top: 2px;
  font: 18px/28px "Liberation Sans", sans-serif;
}
.mixname {
  padding-left: 5px;
}
.mix .num {
  margin-left: 121px;
  padding-top: 4px;
}
.keys {
  margin-left: auto;
  padding: 0 17px 18px 0;
}
.tl-time {
  position: relative;
}
.tl-ruler {
  position: relative;
  overflow: hidden;
}
.tl-ruler span {
  position: absolute;
  top: 39px;
  transform: translateX(-50%);
  padding-left: 4px;
  white-space: nowrap;
}
.render {
  position: absolute;
  bottom: 0;
  height: 4px;
  background: #e03427;
}
.hover {
  position: absolute;
  top: 6px;
  width: 2px;
  height: 82px;
  background: #777;
}
.lane {
  position: relative;
  background: #1f1f1f;
}
.clip {
  position: absolute;
  top: 0;
  bottom: 0;
  display: flex;
  gap: 14px;
  padding: 1px 0 0 15px;
  border: solid #12875c;
  border-width: 6px 2px 6px 5px;
  background: #fb72a5;
  color: #141414;
  font-size: 18px;
  line-height: 22px;
}
.badge {
  width: 24px;
  height: 22px;
  border: 2px solid #a8a878;
  background: #e6bd12;
  font-size: 17px;
  line-height: 18px;
  text-align: center;
}
.fade {
  position: absolute;
  top: -6px;
}
.fade.l {
  left: -5px;
}
.fade.r {
  right: -2px;
}
.trim {
  position: absolute;
  top: -6px;
  left: 100%;
}
.tip {
  position: absolute;
  z-index: 5;
  left: calc(100% + 9px);
  top: 88px;
  height: 36px;
  padding: 0 26px 0 14px;
  border: 1px solid #000;
  background: #474747;
  color: #c6c6c6;
  font: 22px/34px Inter, sans-serif;
  white-space: nowrap;
  box-shadow: 0 6px 20px rgba(0, 0, 0, 0.35);
}
.playhead {
  position: absolute;
  top: 66px;
  bottom: 0;
  width: 2px;
  background: #3a84d2;
}
.playhead svg {
  margin-left: -10px;
}
.tl-scroll {
  padding-top: 98px;
}
.tl-scroll .split {
  width: 24px;
  margin: 2px 0 0;
}
.vbar {
  width: 20px;
  margin-left: 2px;
  display: flex;
  flex-direction: column;
  align-items: center;
  justify-content: space-between;
  background: var(--line);
}
.vbar.video {
  flex: none;
  height: 284px;
  padding: 5px 0 0;
  border-radius: 10px 10px 0 0;
}
.vbar.audio {
  flex: 1;
  padding: 2px 0 6px;
  border-radius: 0 0 10px 10px;
}
.tl-zoom {
  flex: none;
  height: 20px;
  margin: 3px 46px 25px 24px;
  border: 2px solid #2d2d2d;
  border-radius: 10px;
  background: #1b1b1b;
}
.tl-zoom div {
  display: flex;
  justify-content: space-between;
  width: 241px;
  height: 20px;
  margin: -2px 0 0 17px;
  border-radius: 10px;
  background: #313131;
}

/* Audio meters */
.meters {
  align-items: center;
  padding-top: 52px;
}
.meter {
  flex: 1;
  display: flex;
  width: 46px;
  border: 2px solid #000;
  background: #1b1b1b;
}
.meter div {
  flex: 1;
  display: flex;
  flex-direction: column;
  justify-content: space-between;
}
.meter div + div {
  border-left: 2px solid #000;
}
.meter div::before {
  content: "";
  height: 18px;
  border-bottom: 2px solid #000;
}
.meter i {
  height: 3px;
  margin-bottom: 3px;
  background: #e8e83a;
}
.solo {
  flex: none;
  display: flex;
  gap: 2px;
  margin: 7px 0 25px;
}
.solo button {
  width: 21px;
  height: 34px;
  border: 2px solid #333;
  border-radius: 4px;
  background: #1b1b1b;
  font: 18px/28px "Liberation Sans", sans-serif;
}

/* Essential graphics */
.graphics h2 {
  padding: 26px 0 0 24px;
}
.eg {
  flex: 1;
  min-height: 0;
  display: grid;
  grid-template-columns: minmax(0, 1fr) 22px;
  margin-top: 33px;
}
.eg-body {
  padding: 19px 0 0 22px;
}
.eg-tabs {
  display: flex;
  gap: 44px;
  padding-left: 8px;
}
.eg-tabs button {
  padding-bottom: 6px;
  border-bottom: 4px solid transparent;
  color: #8f8f8f;
}
.eg-tabs .on {
  color: #cfcfcf;
  border-color: #b8b8b8;
}
.eg-label {
  display: block;
  margin: 75px 0 5px;
}
textarea {
  display: block;
  width: 100%;
  height: 94px;
  padding: 3px 6px;
  border: 0;
  resize: none;
  background: #171717;
  color: #8f8f8f;
  font: inherit;
}
.card {
  --knob: #191919;
  margin-top: 10px;
  padding: 17px 16px 20px 12px;
  border-radius: 8px;
  background: #191919;
}
.card .pick {
  height: 40px;
}
.card .pick svg {
  top: 14px;
}
.card .font {
  width: 100%;
  margin: 5px 0 10px;
}
.font select {
  background: linear-gradient(#333, #333) right 36px top / 2px 100% no-repeat #171717;
}
.card .weight {
  flex: 1;
}
.style-row {
  display: flex;
  gap: 4px;
  height: 40px;
  padding-right: 8px;
}
.style-row .weight {
  margin-right: -4px;
}
.faux {
  width: 48px;
  height: 40px;
  font: 28px/40px "DejaVu Serif", serif;
  color: #b0b0b0;
  white-space: nowrap;
}
.faux small {
  font-size: 21px;
}
.card .num {
  display: block;
  margin: 8px 12px 4px 0;
  text-align: right;
}
.card .slider {
  width: calc(100% - 28px);
  margin-left: 14px;
  background-position: center;
  background-size: 100% 4px;
}
.colors {
  display: flex;
  flex-direction: column;
  gap: 32px;
  margin: 42px 8px 34px 0;
}
.colors div {
  display: flex;
  align-items: center;
  height: 30px;
}
.colors .swatch {
  width: 66px;
  height: 30px;
  margin-right: 20px;
}
.colors span {
  flex: 1;
}
.param {
  display: grid;
  grid-template-columns: minmax(0, 1fr) auto;
  row-gap: 12px;
  padding: 0 16px 26px 0;
}
.param .num {
  width: 0;
}
.param .min {
  padding-left: 16px;
}
.param .slider {
  grid-column: 1 / -1;
  width: calc(100% + 14px);
  margin: 6px 0 0 5px;
}
.eg-scroll {
  padding: 3px 0 18px 1px;
  margin-bottom: 4px;
  background: #1d1d1d;
}
.eg-scroll i {
  height: 100%;
  border-radius: 10px;
  background: #333;
}

/* Status bar */
.status {
  flex: none;
  display: flex;
  align-items: center;
  gap: 76px;
  height: 45px;
  padding-bottom: 2px;
  border-bottom: 6px solid #0b0b0b;
  background: linear-gradient(#555, #555) left bottom / 100% 2px no-repeat #262626;
}
</style>
